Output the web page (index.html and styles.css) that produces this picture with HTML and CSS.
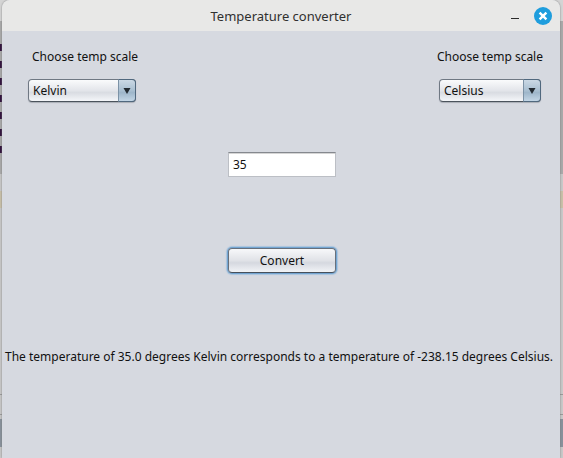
FILE: index.html
```html
<!DOCTYPE html>
<html lang="en">
<head>
  <meta charset="UTF-8" />
  <meta name="viewport" content="width=device-width, initial-scale=1" />
  <title>Temperature converter</title>
  <link rel="stylesheet" href="styles.css">
</head>
<body>
  <main class="window">
    <header class="titlebar">
      <h1>Temperature converter</h1>
      <div class="window-buttons">
        <button type="button" class="window-button" aria-label="Minimize">
          <svg width="8" height="18" viewBox="0 0 8 18"><path d="M0 11.5h8" stroke="#2b2b2b" stroke-width="1" /></svg>
        </button>
        <button type="button" class="window-button" aria-label="Close">
          <svg width="18" height="18" viewBox="0 0 18 18">
            <circle cx="9" cy="9" r="9" fill="#1e9ddd" />
            <path d="M5.6 5.6l6.8 6.8M12.4 5.6l-6.8 6.8" stroke="#fff" stroke-width="2.4" />
          </svg>
        </button>
      </div>
    </header>

    <form class="converter">
      <div class="scales">
        <div class="scale">
          <label for="from-scale">Choose temp scale</label>
          <div class="combo combo-from">
            <select id="from-scale">
              <option>Celsius</option>
              <option>Fahrenheit</option>
              <option selected>Kelvin</option>
            </select>
            <span class="arrow"><svg width="8" height="6" viewBox="0 0 8 6"><path d="M0.5 0h7L4 6z" fill="#222a31" /></svg></span>
          </div>
        </div>
        <div class="scale">
          <label for="to-scale">Choose temp scale</label>
          <div class="combo combo-to">
            <select id="to-scale">
              <option selected>Celsius</option>
              <option>Fahrenheit</option>
              <option>Kelvin</option>
            </select>
            <span class="arrow"><svg width="8" height="6" viewBox="0 0 8 6"><path d="M0.5 0h7L4 6z" fill="#222a31" /></svg></span>
          </div>
        </div>
      </div>

      <input class="degrees" type="text" value="35" aria-label="Temperature" />
      <button class="convert" type="button">Convert</button>
      <output class="result">The temperature of 35.0 degrees Kelvin corresponds to a temperature of -238.15 degrees Celsius.</output>
    </form>
  </main>
</body>
</html>
```
FILE: styles.css
```css
* {
  box-sizing: border-box;
}

/* desktop behind the window, only its edges show */
body {
  margin: 0;
  padding: 0 3px 0 2px;
  min-height: 100vh;
  display: flex;
  font-family: "Noto Sans", sans-serif;
  font-size: 12px;
  line-height: 16px;
  color: #111;
  background:
    repeating-linear-gradient(#30103c 0 7px, transparent 7px 17px) 0 44px / 2px 110px no-repeat,
    linear-gradient(#d4d4d4 0 21px, #a9a9a9 21px 174px, #c8c8c8 174px 191px, #c9c0a8 191px 208px,
      #c8c8c8 208px 394px, #999 394px 395px, #c8c8c8 395px 414px, #999 414px 415px,
      #c8c8c8 415px 419px, #87919b 419px 447px, #c8c8c8 447px);
}

.window {
  flex: 1;
  min-width: 0;
  background: #d6d9e0;
  border-radius: 8px 8px 0 0;
  box-shadow: 0 0 2px #777;
}

.titlebar {
  display: grid;
  grid-template-columns: 1fr auto 1fr;
  align-items: center;
  height: 31px;
  padding: 0 8px;
  background: #e8e8e7;
  border-radius: 8px 8px 0 0;
}

h1 {
  grid-column: 2;
  margin: 0;
  font-size: 13px;
  line-height: 16px;
  font-weight: 400;
  color: #303030;
}

.window-buttons {
  display: flex;
  justify-content: flex-end;
  gap: 15px;
}

.window-button {
  display: flex;
  padding: 0;
  border: 0;
  background: none;
}

.converter {
  display: flex;
  flex-direction: column;
  align-items: center;
}

.scales {
  align-self: stretch;
  display: flex;
  justify-content: space-between;
  padding: 18px 17px 0 26px;
}

.scale {
  display: flex;
  flex-direction: column;
  align-items: center;
  gap: 14px;
}

.scale:first-child {
  align-items: flex-start;
}

.scale:first-child label {
  padding-left: 4px;
}

.combo {
  position: relative;
}

.combo-from {
  width: 108px;
}

.combo-to {
  width: 102px;
}

select {
  appearance: none;
  display: block;
  width: 100%;
  height: 23px;
  padding: 0 20px 0 4px;
  border: 1px solid #6f7883;
  border-bottom-color: #4b535c;
  border-radius: 4px;
  background: linear-gradient(#fafbfc, #e3e5ea 50%, #d9dce2 60%, #f4f6f9);
  box-shadow: 0 1px 1px #a9adb5;
  font: inherit;
  color: inherit;
}

.arrow {
  position: absolute;
  top: 0;
  right: 0;
  bottom: 0;
  width: 18px;
  display: flex;
  align-items: center;
  justify-content: center;
  border: 1px solid #50687e;
  border-left-color: #7c92a6;
  border-radius: 0 4px 4px 0;
  background: linear-gradient(#cbd9e5, #a9bfd1 50%, #9eb6ca 60%, #c3d6e6);
  pointer-events: none;
}

.degrees {
  width: 108px;
  height: 25px;
  margin-top: 50px;
  padding: 0 4px;
  border: 1px solid #bcbfc5;
  border-top-color: #85888e;
  box-shadow: inset 0 1px 0 #d5d5d5;
  background: #fff;
  font: inherit;
  color: inherit;
}

.convert {
  width: 108px;
  height: 25px;
  margin-top: 71px;
  padding: 0;
  border: 1px solid #67707c;
  border-bottom-color: #46505c;
  border-radius: 4px;
  background: linear-gradient(#f7f8fa, #e0e2e7 50%, #d5d8df 60%, #f1f3f6);
  box-shadow: 0 0 0 1px #73a4d1, 0 0 1px 2px #a9c4dd;
  font: inherit;
  color: inherit;
}

.degrees,
.convert {
  margin-left: 2px;
}

.result {
  align-self: flex-start;
  margin-top: 76px;
  padding: 0 3px;
}
```
